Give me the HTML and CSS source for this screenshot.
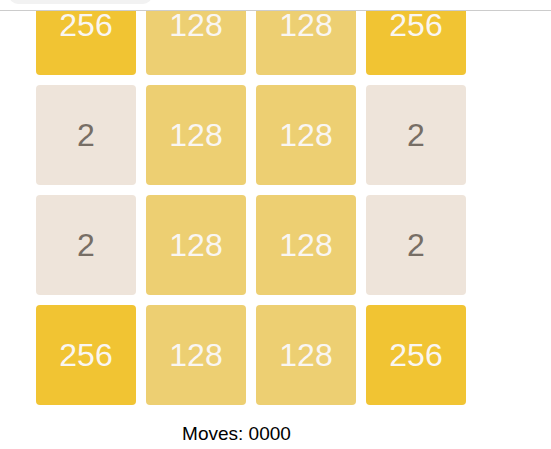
FILE: index.html
```html
<!DOCTYPE html>
<html>
<head>
<meta charset="utf-8">
<link rel="stylesheet" href="styles.css">
</head>
<body>
<header class="topbar">
  <div class="pill"></div>
</header>
<main class="viewport">
  <div class="board">
    <div class="tile t256">256</div>
    <div class="tile t128">128</div>
    <div class="tile t128">128</div>
    <div class="tile t256">256</div>
    <div class="tile t2">2</div>
    <div class="tile t128">128</div>
    <div class="tile t128">128</div>
    <div class="tile t2">2</div>
    <div class="tile t2">2</div>
    <div class="tile t128">128</div>
    <div class="tile t128">128</div>
    <div class="tile t2">2</div>
    <div class="tile t256">256</div>
    <div class="tile t128">128</div>
    <div class="tile t128">128</div>
    <div class="tile t256">256</div>
  </div>
  <div class="moves">Moves: 0000</div>
</main>
</body>
</html>
```

FILE: styles.css
```css
html, body {
  margin: 0;
  padding: 0;
  background: #ffffff;
  font-family: "Liberation Sans", Arial, sans-serif;
  overflow: hidden;
}
.topbar {
  height: 10px;
  border-bottom: 1px solid #cccccc;
  overflow: hidden;
  position: relative;
  background: #ffffff;
}
.pill {
  margin-left: 9px;
  margin-top: -30px;
  width: 143px;
  height: 34px;
  border-radius: 9px;
  background: #f2f2f2;
}
.viewport {
  height: 438px;
  overflow: hidden;
}
.board {
  margin-top: -36px;
  margin-left: 36px;
  display: grid;
  grid-template-columns: repeat(4, 100px);
  grid-auto-rows: 100px;
  gap: 10px;
  width: 430px;
}
.tile {
  border-radius: 4px;
  display: flex;
  align-items: center;
  justify-content: center;
  font-size: 32px;
  color: #f9f6f2;
}
.t2 {
  background: #eee4da;
  color: #776e65;
}
.t128 {
  background: #edcf72;
}
.t256 {
  background: #f1c433;
}
.moves {
  width: 473px;
  text-align: center;
  margin-top: 18px;
  font-size: 19px;
  color: #000000;
}
```
